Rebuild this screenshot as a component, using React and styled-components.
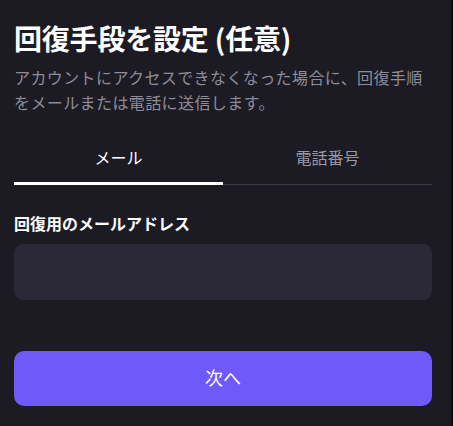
import React, { useState } from 'react';
import styled, { createGlobalStyle } from 'styled-components';

const GlobalStyle = createGlobalStyle`
	html, body {
		margin: 0;
		padding: 0;
		background: #1c1b24;
	}
	body {
		font-family: 'Noto Sans CJK JP', 'Noto Sans', sans-serif;
		-webkit-font-smoothing: antialiased;
	}
`;

const Page = styled.div`
	min-height: 426px;
	box-sizing: border-box;
	padding: 19px 19px 0 14px;
	border-right: 2px solid #0b0b0e;
	background: #1c1b24;
	color: #ffffff;
	display: flex;
	flex-direction: column;
`;

const Title = styled.h1`
	margin: 0;
	font-size: 28px;
	line-height: 38px;
	font-weight: 700;
	letter-spacing: -0.2px;
`;

const Subtitle = styled.p`
	margin: 8px 0 0;
	font-size: 16px;
	line-height: 25px;
	color: #8e8c97;
	letter-spacing: 0.4px;
`;

const Tabs = styled.div`
	display: flex;
	margin-top: 30px;
	border-bottom: 1px solid #3a3944;
`;

const Tab = styled.button`
	flex: 1;
	background: none;
	border: none;
	padding: 0 0 16px;
	font-family: inherit;
	font-size: 16px;
	line-height: 24px;
	color: ${props => (props.active ? '#ffffff' : '#9a98a3')};
	box-shadow: ${props => (props.active ? 'inset 0 -3px 0 #ffffff' : 'none')};
	margin-bottom: -1px;
	cursor: pointer;
`;

const Field = styled.div`
	display: flex;
	flex-direction: column;
	gap: 9px;
	margin-top: 26px;
`;

const Label = styled.label`
	font-size: 16px;
	line-height: 24px;
	font-weight: 700;
	color: #ffffff;
`;

const Input = styled.input`
	height: 56px;
	box-sizing: border-box;
	border: none;
	outline: none;
	border-radius: 9px;
	background: #2a2935;
	color: #ffffff;
	padding: 0 16px;
	font-family: inherit;
	font-size: 16px;
`;

const NextButton = styled.button`
	margin-top: 51px;
	height: 55px;
	box-sizing: border-box;
	padding: 0 0 4px;
	border: none;
	border-radius: 10px;
	background: #6f59fa;
	color: #ffffff;
	font-family: inherit;
	font-size: 18px;
	cursor: pointer;
`;

export default function App() {
	const [tab, setTab] = useState('mail');
	return (
		<>
			<GlobalStyle />
			<Page>
				<Title>回復手段を設定 (任意)</Title>
				<Subtitle>アカウントにアクセスできなくなった場合に、回復手順をメールまたは電話に送信します。</Subtitle>
				<Tabs>
					<Tab active={tab === 'mail'} onClick={() => setTab('mail')}>
						メール
					</Tab>
					<Tab active={tab === 'phone'} onClick={() => setTab('phone')}>
						電話番号
					</Tab>
				</Tabs>
				<Field>
					<Label>{tab === 'mail' ? '回復用のメールアドレス' : '回復用の電話番号'}</Label>
					<Input type={tab === 'mail' ? 'email' : 'tel'} />
				</Field>
				<NextButton>次へ</NextButton>
			</Page>
		</>
	);
}
